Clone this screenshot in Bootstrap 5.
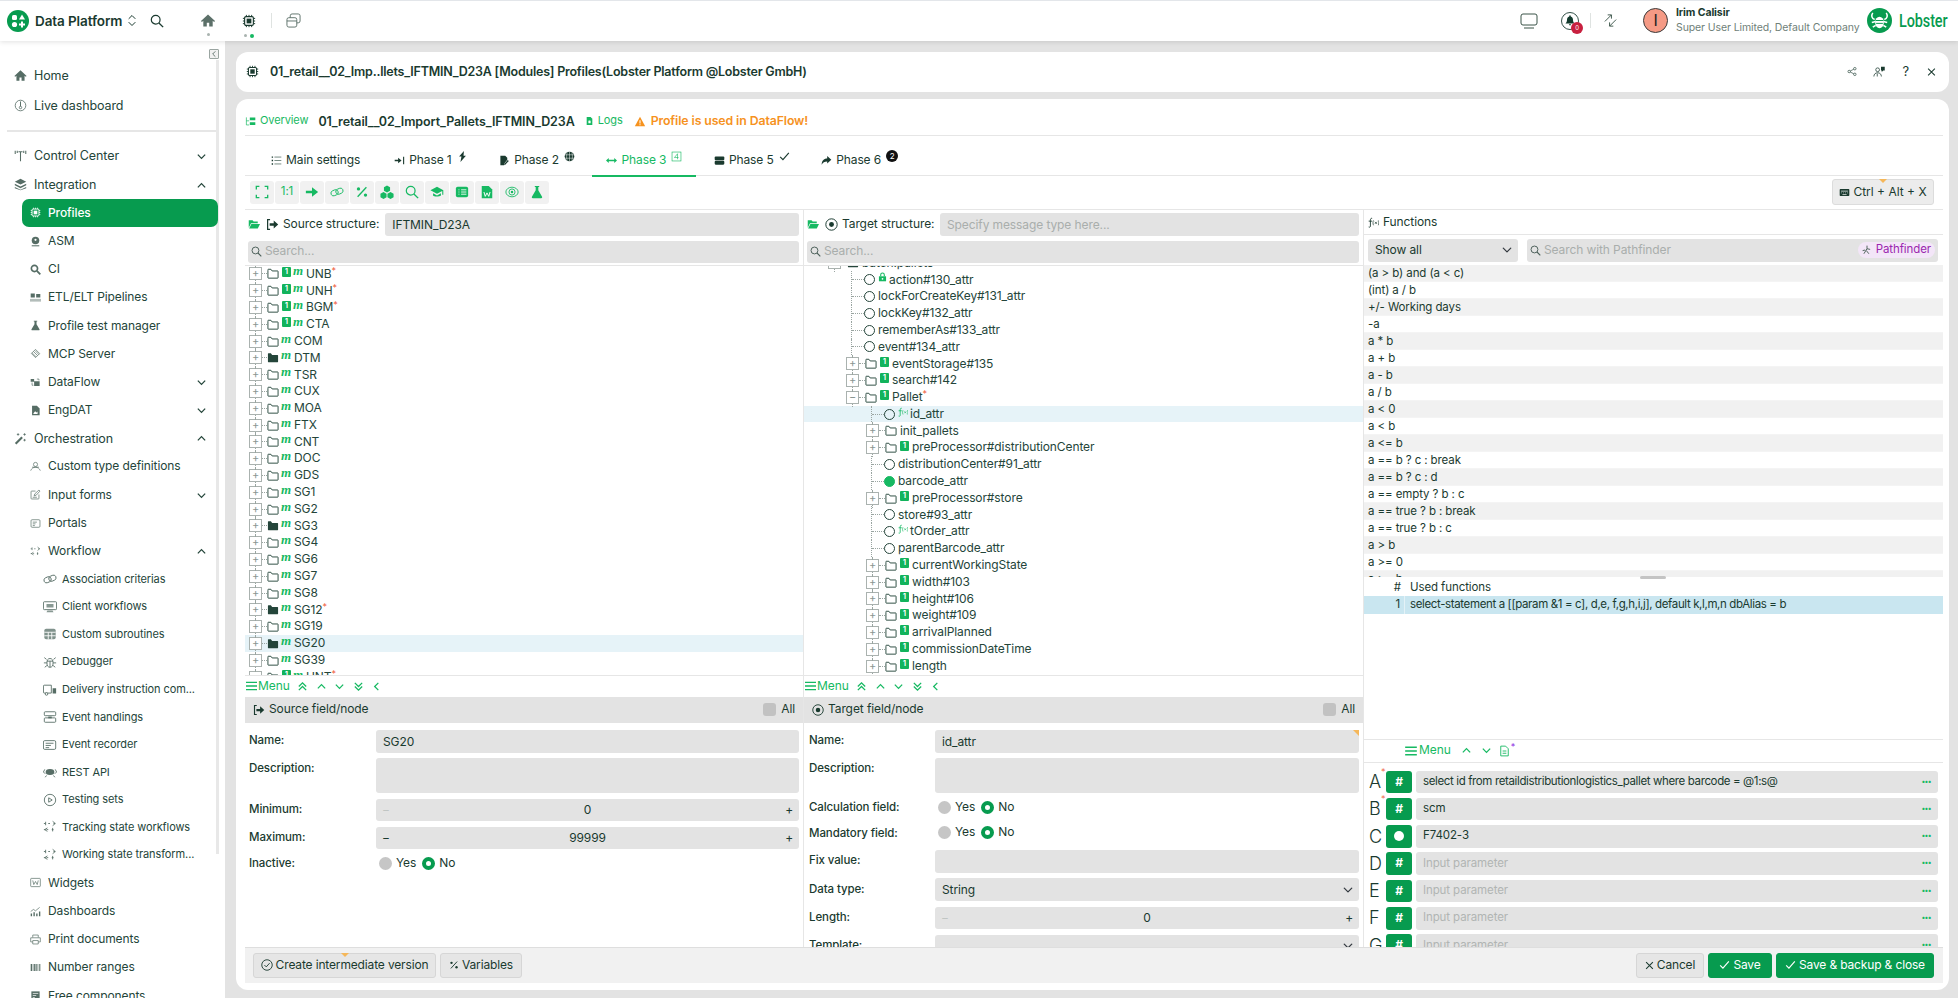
<!DOCTYPE html>
<html lang="en">
<head>
  <meta charset="UTF-8" />
  <meta name="viewport" content="width=device-width, initial-scale=1.0" />
  <title>Data Platform - Profiles</title>
  <link href="https://cdn.jsdelivr.net/npm/bootstrap@5.3.0/dist/css/bootstrap.min.css" rel="stylesheet" />
  <script src="https://cdn.jsdelivr.net/npm/bootstrap@5.3.0/dist/js/bootstrap.bundle.min.js"></script>
  <style>
    :root { --ink: #1a3a2f; --green: #079b4f; --bright: #16b962; --fill: #e3e3e3; --pale: #f1f1f1; --line: #e6e6e6; }
    html, body { height: 100%; overflow: hidden; }
    body { background: var(--fill); color: var(--ink); font: 12px/1.2 Inter, "Liberation Sans", sans-serif; letter-spacing: -.1px; }
    svg { flex: none; display: block; }
    .tight-text { letter-spacing: -.37px; }

    /* top bar */
    .top-bar { height: 41px; background: #fff; box-shadow: 0 1px 5px rgba(0,0,0,.12); position: relative; z-index: 2; padding: 0 12px 0 7px; border-top: 1px solid #e3e6ea; }
    .brand-name { font-size: 13.5px; font-weight: 600; margin-left: 6px; }
    .top-dot { width: 3px; height: 3px; border-radius: 50%; background: #a9b3af; position: absolute; top: 20px; }
    .top-dot.on { width: 4px; height: 4px; background: var(--bright); }
    .top-slot { position: relative; }
    .top-sep { width: 1px; height: 15px; background: #dfe3e1; }
    .bell-wrap { width: 18px; height: 18px; border: 1px solid #35524a; border-radius: 50%; position: relative; color: #123a2d; }
    .bell-count { position: absolute; right: -5px; bottom: -5px; width: 12px; height: 12px; border-radius: 50%; background: #c8203f; color: #fff; font-size: 6px; line-height: 12px; text-align: center; }
    .avatar-ring { width: 25px; height: 25px; border-radius: 50%; background: #f59a85; border: 1px solid #3b3b3b; color: #222; font-size: 16px; line-height: 23px; text-align: center; }
    .user-block { width: 191px; white-space: nowrap; }
    .user-name { font-size: 10.5px; font-weight: 700; }
    .user-sub { font-size: 10.5px; color: #6f7f79; margin-top: 2px; }
    .lobster-word { width: 47px; color: var(--green); font: 500 18px Roboto, sans-serif; margin-left: 7px; transform: scaleX(.8); transform-origin: left center; white-space: nowrap; }

    /* sidebar */
    .side-bar { width: 225px; flex: none; background: #fff; position: relative; overflow: hidden; padding-top: 20px; }
    .side-track { position: absolute; left: 216px; top: 19px; width: 3px; height: 794px; background: #e8e8e8; }
    .side-close { position: absolute; left: 209px; top: 8px; width: 10px; height: 10px; border: 1px solid #9aa5a1; border-radius: 1px; background: #f1f1f1; }
    .side-link { height: 28.2px; display: flex; align-items: center; color: #24453a; text-decoration: none; white-space: nowrap; position: relative; font-size: 12px; }
    .side-link.lv0 { padding-left: 14px; font-size: 12.5px; }
    .side-link.lv1 { padding-left: 30px; }
    .side-link.lv2 { padding-left: 43px; height: 27.6px; font-size: 11px; }
    .side-link > svg:first-child { margin-right: 7px; color: #566d65; }
    .side-link.lv2 > svg:first-child { margin-right: 5px; }
    .side-link.is-on { background: var(--green); color: #fff; margin: 0 7px 0 22px; padding-left: 8px; border-radius: 7px; font-weight: 500; }
    .side-link.is-on > svg:first-child { color: #fff; }
    .side-caret { position: absolute; left: 196px; top: 50%; margin-top: -5px; color: #24453a; }
    .side-rule { height: 2px; background: #e6e6e6; margin: 9px 7px 10px 7px; }
    .side-rule + .side-link { margin-bottom: 1px; }

    /* cards */
    .work-area { flex: 1; min-width: 0; padding: 11px 9px 0 11px; }
    .title-card { height: 40px; background: #fff; border-radius: 12px; margin-bottom: 7px; padding: 0 13px 0 10px; }
    .title-text { font-weight: 600; font-size: 12.5px; margin-left: 11px; white-space: nowrap; }
    .title-card .title-text { letter-spacing: -.22px; }
    .main-card { height: 891px; background: #fff; border-radius: 12px; padding: 0 6px 7px 9px; }
    .over-row { height: 37px; border-bottom: 1px solid var(--line); white-space: nowrap; padding-top: 9px; }
    .green-link { color: var(--bright); font-size: 11px; }
    .warn-text { color: #f6921e; font-weight: 600; font-size: 12.3px; }
    .tab-row { height: 40px; border-bottom: 1px solid var(--line); padding-left: 26px; white-space: nowrap; }
    .tab-item { height: 40px; display: flex; align-items: center; position: relative; font-size: 12px; padding-top: 9px; }
    .tab-item + .tab-item { margin-left: 31.5px; }
    .tab-item:nth-child(2) { margin-left: 34px; }
    .tab-item .tab-sup { margin: -8px 0 0 5px; }
    .tab-item.is-on { color: var(--bright); }
    .tab-item.is-on::after { content: ""; position: absolute; left: -14px; right: -14px; bottom: -1px; height: 2px; background: var(--bright); }
    .tool-row { height: 34px; border-bottom: 1px solid var(--line); padding: 0 9px 0 5px; }
    .tool-btn { width: 24px; height: 23px; background: var(--pale); border-radius: 3px; color: var(--bright); display: flex; align-items: center; justify-content: center; font-size: 11.5px; margin-right: 1px; }
    .key-btn { width: 102px; height: 26px; position: relative; background: #ececec; border: 1px solid #dcdcdc; border-radius: 3px; font-size: 12px; color: var(--ink); padding: 0; display: flex; align-items: center; justify-content: center; gap: 3px; }
    .hint-tip { position: absolute; top: -1px; left: 50%; margin-left: -4px; border: 4px solid transparent; border-top: 4px solid #f5b75a; border-bottom: 0; }

    /* panels */
    .panel-row { height: 737px; }
    .pane { position: relative; overflow: hidden; }
    .pane-src { width: 559px; flex: none; border-right: 1px solid var(--line); }
    .pane-dst { width: 560px; flex: none; border-right: 1px solid var(--line); }
    .pane-fn { flex: 1; min-width: 0; }
    .struct-row { height: 31px; padding: 3px 4px 5px 3px; white-space: nowrap; font-size: 12px; }
    .struct-label { width: 108px; margin: 0 6px 0 4px; }
    .struct-label.short { width: 91px; margin-right: 7px; }
    .fill-input.form-control, .fill-input.form-select { background-color: var(--fill); border: 0; border-radius: 3px; color: var(--ink); font-size: 12px; padding: 0 7px; height: 23px; min-height: 0; box-shadow: none; letter-spacing: -.1px; resize: none; }
    .fill-input::placeholder { color: #a9aeac; }
    .fill-input.form-select { background-position: right 6px center; background-size: 10px; }
    .find-box { height: 22px; background: var(--fill); border-radius: 3px; color: #a9aeac; padding: 0 3px; margin: 0 4px 2px 3px; gap: 3px; font-size: 12px; }
    .find-box svg { color: #4b5f58; }
    .tree-box { height: 410px; overflow: hidden; border-top: 1px solid var(--line); }
    .tree-shift { margin-top: -11px; }
    .tree-line { height: 16.8px; display: flex; align-items: center; white-space: nowrap; font-size: 12px; color: #24453a; }
    .tree-line.is-sel { background: #e6f3f8; }
    .tree-pad { flex: none; align-self: stretch; }
    .tree-pad.guide { border-right: 1px dotted #9aa5a1; }
    .tree-plus { width: 13px; height: 13px; flex: none; position: relative; border: 1px solid #aab2af; background: #fff; color: #8a9692; font-size: 11px; line-height: 10px; text-align: center; }
    .tree-plus::before { content: ""; position: absolute; left: 5px; top: -3px; height: 2px; border-left: 1px dotted #9aa5a1; }
    .tree-plus::after { content: ""; position: absolute; left: 5px; bottom: -4px; height: 3px; border-left: 1px dotted #9aa5a1; }
    .tree-dash { flex: none; border-top: 1px dotted #9aa5a1; }
    .tree-one { width: 9px; height: 10px; flex: none; background: #12b35c; color: #fff; border-radius: 1px; font-size: 7px; font-weight: 700; line-height: 10px; text-align: center; margin: -4px 0 0 3px; letter-spacing: 0; }
    .tree-m { width: 10px; flex: none; color: var(--bright); font: italic 700 13px/10px "Liberation Serif", serif; text-align: center; margin: -5px 0 0 2px; }
    .tree-name { margin-left: 2px; }
    .tree-name.wide { margin-left: 3px; }
    .tree-tag { color: var(--bright); margin: -5px 0 0 3px; }
    .tree-dot { width: 11px; height: 11px; border-radius: 50%; border: 1px solid #24453a; flex: none; }
    .tree-dot.on { background: var(--bright); border-color: var(--bright); }
    .req-star { color: #ef5a3c; font-size: 9px; margin-top: -5px; }
    .menu-strip { height: 22px; border-top: 1px solid var(--line); padding-left: 1px; color: var(--bright); gap: 1px; font-size: 12px; background: #fff; }
    .menu-strip svg.chev { margin-left: 6.5px; }
    .node-head { height: 26px; background: var(--fill); padding: 0 8px; font-size: 12px; white-space: nowrap; }
    .all-box { width: 13px; height: 13px; border-radius: 3px; background: #c2c2c2; margin-right: 5px; }
    .form-area { padding: 7px 4px 0; }
    .form-line { display: flex; align-items: center; margin-bottom: 5.5px; font-size: 11.5px; font-weight: 500; color: #1a3a2f; }
    .form-line > label { width: 127px; flex: none; margin: 0; }
    .pane-dst .form-area { padding-left: 5px; }
    .pane-dst .form-line > label { width: 126px; }
    .form-line.tall { align-items: flex-start; }
    .form-line.tall > label { padding-top: 4px; }
    .form-line.tall .form-control { height: 35px; }
    .form-line.radio-row { margin-bottom: 6.5px; }
    .step-box { height: 22.5px; flex: 1; background: var(--fill); border-radius: 3px; padding: 0 6px; font-weight: 400; font-size: 12px; }
    .step-box .dim { color: #c0c5c3; }
    .pick-line { height: 21px; flex: 1; padding-left: 3px; font-weight: 400; font-size: 12px; gap: 4px; margin-top: -2px; }
    .pick-off { width: 13px; height: 13px; border-radius: 50%; background: #c6c6c6; }
    .pick-on { width: 13px; height: 13px; border-radius: 50%; border: 4px solid var(--green); background: #fff; margin-left: 2px; }
    .fold-corner { position: absolute; right: 0; top: 0; border-top: 6px solid #f5b75a; border-left: 6px solid transparent; }

    /* functions */
    .fn-head { height: 24px; border-bottom: 1px solid var(--line); padding: 1px 0 0 4px; font-size: 12px; gap: 4px; margin-top: 1px; }
    .fn-tools { height: 30px; padding: 4px 5px 3px 4px; gap: 9px; }
    .fn-pick { width: 150px !important; flex: none; }
    .fn-find.find-box { height: 23px; margin: 0; }
    .path-tag { margin-left: auto; background: #f3e6f8; color: #9b26af; border-radius: 9px; padding: 1px 4px; font-size: 11.5px; white-space: nowrap; }
    .fn-list { height: 312px; overflow: hidden; }
    .fn-line { height: 17px; line-height: 17px; padding-left: 4px; font-size: 11.5px; border-bottom: 1px solid #f4f4f4; }
    .fn-line:nth-child(odd) { background: var(--pale); }
    .fn-grip { height: 4px; position: relative; background: #fff; }
    .fn-grip::after { content: ""; position: absolute; left: 276px; top: -1px; width: 26px; height: 3px; border-radius: 2px; background: #c4c4c4; }
    .used-head, .used-line { display: flex; height: 18px; align-items: center; font-size: 11.5px; white-space: nowrap; }
    .used-head { height: 15px; }
    .used-num { width: 41px; flex: none; text-align: right; padding-right: 4px; margin-right: 5px; align-self: stretch; display: flex; align-items: center; justify-content: flex-end; }
    .used-line { background: #c9e6f0; }
    .used-line .used-num { border-right: 1px solid #e4f2f7; }
    .used-gap { height: 126px; border-bottom: 1px solid var(--line); }
    .param-menu { height: 23px; border-bottom: 1px solid var(--line); padding-left: 41px; gap: 2px; color: var(--bright); font-size: 12px; }
    .param-menu .gap-a { margin-left: 8px; }
    .param-menu .gap-b { margin-left: 7px; }
    .param-menu .gap-c { margin-left: 6px; }
    .param-mark { color: #8a2be2; font-size: 9px; margin-top: -6px; }
    .param-list { padding: 8px 5px 0 5px; height: 184px; overflow: hidden; }
    .param-line { display: flex; align-items: center; height: 22.5px; margin-bottom: 4.8px; }
    .param-letter { width: 17px; flex: none; font-size: 18px; font-weight: 300; position: relative; }
    .param-letter i { position: absolute; left: 12px; top: -4px; color: #ef5a3c; font-style: normal; font-size: 9px; }
    .param-kind { width: 26px; height: 22.5px; flex: none; background: var(--green); color: #fff; border-radius: 3px; font-size: 12px; font-weight: 700; display: flex; align-items: center; justify-content: center; margin-right: 4px; }
    .param-kind b { width: 10px; height: 10px; border-radius: 50%; background: #fff; }
    .param-box { flex: 1; height: 22.5px; background: var(--fill); border-radius: 3px; padding: 0 7px; font-size: 11.5px; white-space: nowrap; }
    .param-box.empty { color: #b1b5b3; }
    .more-dots { margin-left: auto; color: var(--bright); font-weight: 700; font-size: 7px; letter-spacing: -.2px; }

    /* footer */
    .foot-row { height: 36px; background: var(--pale); border-top: 1px solid #dedede; padding: 0 9px 0 8px; }
    .foot-row .btn { height: 25px; padding: 0 6px; font-size: 12px; border-radius: 3px; display: inline-flex; align-items: center; justify-content: center; gap: 3px; white-space: nowrap; letter-spacing: -.15px; position: relative; }
    .btn.btn-grey { background: #e6e6e6; border: 1px solid #d6d6d6; color: var(--ink); }
    .btn.btn-save { background: var(--green); border: 1px solid var(--green); color: #fff; }
    .foot-row .btn.wide-cancel { width: 68px; }
    .foot-row .btn.wide-save { width: 64px; }
    .foot-row .btn.wide-close { width: 158px; }
    .foot-row .btn.wide-version { width: 183px; }
    .foot-row .btn.wide-vars { width: 82px; }
  </style>
</head>
<body>
  <!-- icon sprite -->
  <svg width="0" height="0" class="position-absolute">
    <defs>
      <symbol id="i-logo" viewBox="0 0 22 22"><circle cx="11" cy="11" r="11" fill="#079b4f"/><rect x="5" y="5" width="5" height="5" rx="1.5" fill="#fff"/><path d="M15 4.5l3 5h-6z" fill="#fff"/><circle cx="7.5" cy="14.5" r="2.6" fill="#fff"/><path d="M15 11.5v6M12 14.5h6" stroke="#fff" stroke-width="2"/></symbol>
      <symbol id="i-home" viewBox="0 0 16 16"><path fill="currentColor" d="M8 1.5.5 8.5l1 1L3 8.2v6.300h3.700v-4h2.600v4H13V8.200l1.500 1.300 1-1z"/></symbol>
      <symbol id="i-chip" viewBox="0 0 16 16"><rect x="3" y="3" width="10" height="10" rx="1.5" fill="none" stroke="currentColor" stroke-width="1.3"/><rect x="5.3" y="5.3" width="5.4" height="5.4" fill="currentColor"/><path d="M5 1v2M8 1v2M11 1v2M5 13v2M8 13v2M11 13v2M1 5h2M1 8h2M1 11h2M13 5h2M13 8h2M13 11h2" stroke="currentColor" stroke-width="1.1"/></symbol>
      <symbol id="i-search" viewBox="0 0 16 16"><circle cx="6.5" cy="6.5" r="5" fill="none" stroke="currentColor" stroke-width="1.4"/><path d="M10.2 10.2 15 15" stroke="currentColor" stroke-width="1.6"/></symbol>
      <symbol id="i-windows" viewBox="0 0 16 16"><rect x="1" y="5" width="10.5" height="10" rx="2" fill="none" stroke="currentColor"/><path d="M4.5 5V3a2 2 0 0 1 2-2H13a2 2 0 0 1 2 2v5.5a2 2 0 0 1-2 2h-1.500M1 8.500h10.500" fill="none" stroke="currentColor"/></symbol>
      <symbol id="i-updown" viewBox="0 0 12 16"><path d="M2 6l4-4 4 4M2 10l4 4 4-4" fill="none" stroke="currentColor" stroke-width="1.2"/></symbol>
      <symbol id="i-down" viewBox="0 0 12 12"><path d="M2 4l4 4 4-4" fill="none" stroke="currentColor" stroke-width="1.4"/></symbol>
      <symbol id="i-up" viewBox="0 0 12 12"><path d="M2 8l4-4 4 4" fill="none" stroke="currentColor" stroke-width="1.4"/></symbol>
      <symbol id="i-up2" viewBox="0 0 12 12"><path d="M2 6l4-4 4 4M2 10l4-4 4 4" fill="none" stroke="currentColor" stroke-width="1.4"/></symbol>
      <symbol id="i-down2" viewBox="0 0 12 12"><path d="M2 2l4 4 4-4M2 6l4 4 4-4" fill="none" stroke="currentColor" stroke-width="1.4"/></symbol>
      <symbol id="i-left" viewBox="0 0 12 12"><path d="M8 2 4 6l4 4" fill="none" stroke="currentColor" stroke-width="1.4"/></symbol>
      <symbol id="i-gauge" viewBox="0 0 16 16"><circle cx="8" cy="8" r="6.5" fill="none" stroke="currentColor"/><path d="M8 3v6" stroke="currentColor" stroke-width="1.2"/><circle cx="8" cy="10.5" r="1.5" fill="none" stroke="currentColor"/></symbol>
      <symbol id="i-antenna" viewBox="0 0 16 16"><path d="M8 4v11M1.500 2v4M4 2v3M12 2v3M14.500 2v4M5.500 3.500h5" fill="none" stroke="currentColor" stroke-width="1.3"/></symbol>
      <symbol id="i-layers" viewBox="0 0 16 16"><path fill="currentColor" d="M8 1 1 4.500 8 8l7-3.500zM1 7l7 3.500L15 7v2l-7 3.500L1 9zm0 4 7 3.500 7-3.500v1.500L8 15l-7-2.500z"/></symbol>
      <symbol id="i-globe" viewBox="0 0 16 16"><circle cx="8" cy="6.500" r="5.500" fill="currentColor"/><path d="M2.500 13.500h11v1.500h-11z" fill="currentColor"/><circle cx="8" cy="5.500" r="1.600" fill="#fff"/></symbol>
      <symbol id="i-findfill" viewBox="0 0 16 16"><circle cx="6.500" cy="6.500" r="4.500" fill="none" stroke="currentColor" stroke-width="2.400"/><path d="M10 10l5 5" stroke="currentColor" stroke-width="2.600"/></symbol>
      <symbol id="i-etl" viewBox="0 0 16 16"><path fill="currentColor" d="M1 2h6v6H1zM9 3h6v5H9z"/><path fill="currentColor" opacity=".45" d="M0 10h16v4H0z"/></symbol>
      <symbol id="i-flask" viewBox="0 0 16 16"><path fill="currentColor" d="M5.500 1h5v1.200h-1V6l4.300 7.500c.4.800-.1 1.500-1 1.500H3.200c-.9 0-1.400-.7-1-1.500L6.500 6V2.200h-1z"/></symbol>
      <symbol id="i-mcp" viewBox="0 0 16 16"><path d="M8 2l6 6-6 6-6-6zM5 5l6 6M7 3.500l6 6M3 7l6 6" fill="none" stroke="currentColor"/></symbol>
      <symbol id="i-flow" viewBox="0 0 16 16"><path fill="currentColor" d="M1 3h5v4H1zM6 6h8v7H6z"/><path d="M3 8v4h2M10 3h3v2" fill="none" stroke="currentColor"/></symbol>
      <symbol id="i-fileimg" viewBox="0 0 16 16"><path fill="currentColor" d="M3 1h7l4 4v10H3z"/><path fill="#fff" d="M5 12l2.500-3 2 2 1.500-1.500V13H5z"/></symbol>
      <symbol id="i-wand" viewBox="0 0 16 16"><path d="M2 14.500 10 6.500" stroke="currentColor" stroke-width="2.600"/><path d="M5 1.500v3M3.500 3h3M13 1.500v3M11.500 3h3M13 8.500v3M11.500 10h3" stroke="currentColor"/></symbol>
      <symbol id="i-people" viewBox="0 0 16 16"><circle cx="8" cy="5" r="3" fill="none" stroke="currentColor"/><path d="M1 14c1-3 4-5 7-5s6 2 7 5M3 9h10" fill="none" stroke="currentColor"/></symbol>
      <symbol id="i-form" viewBox="0 0 16 16"><path d="M13 8v5.500a1 1 0 0 1-1 1H2.500a1 1 0 0 1-1-1V4a1 1 0 0 1 1-1H8M6 10l1-3 6-5.500 1.500 1.500L9 9zM4 12h6" fill="none" stroke="currentColor"/></symbol>
      <symbol id="i-box" viewBox="0 0 16 16"><rect x="1.500" y="2.500" width="13" height="11" rx="1.500" fill="none" stroke="currentColor"/><path d="M4 6h6M4 8.500h4M4 11h3" stroke="currentColor"/></symbol>
      <symbol id="i-slide" viewBox="0 0 16 16"><path d="M1 4h2M6 4h3M12 4h3M1 11h6M10 11h2" stroke="currentColor" stroke-dasharray="2 1"/><path d="M3 2v4M11 9v4" stroke="currentColor"/><path d="M11 1.500 14 4l-3 2.500M5 9l-3 2 3 2" fill="none" stroke="currentColor"/></symbol>
      <symbol id="i-link" viewBox="0 0 16 16"><rect x="1" y="6" width="8.500" height="6" rx="3" transform="rotate(-25 5 9)" fill="none" stroke="currentColor"/><rect x="6.500" y="4" width="8.500" height="6" rx="3" transform="rotate(-25 11 7)" fill="none" stroke="currentColor"/></symbol>
      <symbol id="i-desk" viewBox="0 0 16 16"><rect x=".5" y="2" width="15" height="9" rx="1" fill="none" stroke="currentColor"/><path d="M4 4.500h8v4H4zM5 12h6l1 2H4z" fill="currentColor" opacity=".7"/></symbol>
      <symbol id="i-table" viewBox="0 0 16 16"><rect x="1.500" y="2" width="13" height="12" rx="2" fill="currentColor" opacity=".75"/><path d="M1.500 6h13M1.500 10h13M6 6v8M10 6v8" stroke="#fff"/></symbol>
      <symbol id="i-bug" viewBox="0 0 16 16"><ellipse cx="8" cy="9" rx="3.500" ry="5" fill="none" stroke="currentColor"/><path d="M4 5 1.500 3M12 5l2.500-2M4.500 9H1M11.500 9H15M4.500 12 2 14M11.500 12 14 14M4.500 7h7M8 7v7" fill="none" stroke="currentColor"/></symbol>
      <symbol id="i-truck" viewBox="0 0 16 16"><path d="M9.500 11.500H1.500a1 1 0 0 1-1-1V3.500a1 1 0 0 1 1-1h8z" fill="none" stroke="currentColor"/><path fill="currentColor" d="M11 6h4v6h-4z"/><circle cx="4" cy="12.500" r="1.500" fill="#fff" stroke="currentColor"/></symbol>
      <symbol id="i-handle" viewBox="0 0 16 16"><rect x="1.500" y="2" width="13" height="4.500" rx="1" fill="none" stroke="currentColor"/><rect x="1.500" y="9" width="13" height="5" rx="1" fill="none" stroke="currentColor"/><path d="M6 7.500h4v2H6z" fill="currentColor"/></symbol>
      <symbol id="i-rec" viewBox="0 0 16 16"><rect x=".5" y="3" width="14" height="10" rx="1.500" fill="none" stroke="currentColor"/><path d="M3 6h9M3 8.500h6M3 11h4" stroke="currentColor"/></symbol>
      <symbol id="i-crab" viewBox="0 0 16 16"><ellipse cx="8" cy="8" rx="5" ry="3.500" fill="currentColor"/><path d="M2 5 .5 8l2 2M14 5l1.500 3-2 2M4 12l-1.500 2M12 12l1.500 2" fill="none" stroke="currentColor"/></symbol>
      <symbol id="i-play" viewBox="0 0 16 16"><circle cx="8" cy="8" r="6.500" fill="none" stroke="currentColor"/><path d="M6.500 5.500v5l4-2.500z" fill="none" stroke="currentColor"/></symbol>
      <symbol id="i-widget" viewBox="0 0 16 16"><rect x="1" y="2" width="14" height="12" rx="1" fill="none" stroke="currentColor"/><path d="M4 5l1.500 6L8 6.500 10.500 11 12 5" fill="none" stroke="currentColor"/></symbol>
      <symbol id="i-chart" viewBox="0 0 16 16"><path d="M1 8l4-3 3 2 6-5" fill="none" stroke="currentColor"/><path fill="currentColor" d="M1 11h2v4H1zM5 9h2v6H5zM9 11h2v4H9zM13 8h2v7h-2z"/></symbol>
      <symbol id="i-print" viewBox="0 0 16 16"><path d="M4 5V1.500h8V5M1 5.500h14v6h-3M4 11.500H1v-6M4 9.500h8v5H4z" fill="none" stroke="currentColor"/></symbol>
      <symbol id="i-bars" viewBox="0 0 16 16"><path fill="currentColor" d="M1 3h2v10H1zM4 3h1v10H4zM6 3h2v10H6zM9 3h1v10H9zM11 3h1v10h-1zM13.500 3h1.500v10h-1.500z"/></symbol>
      <symbol id="i-free" viewBox="0 0 16 16"><path fill="currentColor" d="M2 2h12v12H2z"/><path d="M4 5h8M4 8h5M4 11h3" stroke="#fff"/></symbol>
      <symbol id="i-monitor" viewBox="0 0 18 16"><rect x="1" y="1" width="16" height="11" rx="2" fill="none" stroke="currentColor"/><path d="M4 15h10" stroke="currentColor"/></symbol>
      <symbol id="i-bell" viewBox="0 0 16 16"><path fill="currentColor" d="M8 1c-.6 0-1 .4-1 1v.6C4.900 3 4 4.800 4 7c0 2.500-.8 3.500-2 5h12c-1.200-1.500-2-2.500-2-5 0-2.200-.9-4-3-4.400V2c0-.6-.4-1-1-1zM6.500 13a1.500 1.500 0 0 0 3 0z"/></symbol>
      <symbol id="i-swap" viewBox="0 0 16 16"><path d="M2 9l7-7M5 2h4v4M14 7l-7 7M11 14H7v-4" fill="none" stroke="currentColor"/></symbol>
      <symbol id="i-crabmark" viewBox="0 0 26 26"><circle cx="13" cy="13" r="13" fill="#079b4f"/><ellipse cx="13" cy="15" rx="4.500" ry="6" fill="#fff"/><path d="M6 5c-2 3-1 6 2 7M20 5c2 3 1 6-2 7M5 15l4-1M21 15l-4-1M6 20l3-2M20 20l-3-2" fill="none" stroke="#fff" stroke-width="1.600"/><path d="M9 13h8M9.500 16h7" stroke="#079b4f"/></symbol>
      <symbol id="i-share" viewBox="0 0 16 16"><circle cx="3.500" cy="8" r="2" fill="none" stroke="currentColor"/><circle cx="12.500" cy="3.500" r="2" fill="none" stroke="currentColor"/><circle cx="12.500" cy="12.500" r="2" fill="none" stroke="currentColor"/><path d="M5.300 7.100 10.700 4.400M5.300 8.900l5.400 2.700" stroke="currentColor"/></symbol>
      <symbol id="i-users" viewBox="0 0 16 16"><circle cx="5.500" cy="5" r="2.500" fill="none" stroke="currentColor"/><path d="M.5 14c0-3 2-5 5-5s5 2 5 5M5 10v4" fill="none" stroke="currentColor"/><path fill="currentColor" d="M10 1h5v5h-2l-2 2V6h-1z"/></symbol>
      <symbol id="i-close" viewBox="0 0 12 12"><path d="M1.500 1.500l9 9M10.500 1.500l-9 9" stroke="currentColor" stroke-width="1.400"/></symbol>
      <symbol id="i-tree" viewBox="0 0 16 16"><path d="M2 2v11h4M2 7h4" fill="none" stroke="currentColor"/><path fill="currentColor" d="M7 2h8v4H7zM7 9h8v4H7z"/></symbol>
      <symbol id="i-filex" viewBox="0 0 16 16"><path fill="currentColor" d="M3 1h7l3 3v11H3z"/><rect x="6" y="7" width="4" height="5" rx="1" fill="#fff"/></symbol>
      <symbol id="i-warn" viewBox="0 0 16 16"><path fill="currentColor" d="M8 1 .5 15h15z"/><path d="M8 6v5M8 12v1.500" stroke="#fff" stroke-width="1.500"/></symbol>
      <symbol id="i-list" viewBox="0 0 16 16"><path d="M5 3h10M5 8h10M5 13h10" stroke="currentColor" stroke-width="1.200" opacity=".7"/><path d="M1 3h2M1 8h2M1 13h2" stroke="currentColor" stroke-width="2"/></symbol>
      <symbol id="i-arrowbar" viewBox="0 0 16 16"><path fill="currentColor" d="M1 7h5V4l5 4-5 4V9H1z"/><path d="M14 2.500v11" stroke="currentColor" stroke-width="1.600"/></symbol>
      <symbol id="i-bolt" viewBox="0 0 12 16"><path fill="currentColor" d="M8 0 1 8h3.500L3 16l8-9H7.500z"/></symbol>
      <symbol id="i-filepen" viewBox="0 0 16 16"><path fill="currentColor" d="M2 1h7l3 3v3l-4 5-.5 3H2z"/><path d="M8 14l5.500-6" stroke="currentColor" stroke-width="2"/></symbol>
      <symbol id="i-world" viewBox="0 0 16 16"><circle cx="8" cy="8" r="7" fill="currentColor"/><path d="M1 5.500h14M1 10.500h14M8 1v14M4.500 2c-1 4-1 8 0 12M11.500 2c1 4 1 8 0 12" fill="none" stroke="#fff" stroke-width=".7"/></symbol>
      <symbol id="i-leftright" viewBox="0 0 16 16"><path fill="currentColor" d="M0 8l4-3.500v2.500h8V4.500L16 8l-4 3.500V9H4v2.500z"/></symbol>
      <symbol id="i-four" viewBox="0 0 16 16"><rect x="1.500" y="1.500" width="13" height="13" fill="none" stroke="currentColor" stroke-width=".9"/><path d="M9.500 4v8M9.500 4 5 9.500h6" fill="none" stroke="currentColor" stroke-width=".9"/></symbol>
      <symbol id="i-server" viewBox="0 0 16 16"><rect x="1" y="2" width="14" height="5.500" rx="1.500" fill="currentColor"/><rect x="1" y="8.500" width="14" height="5.500" rx="1.500" fill="currentColor"/></symbol>
      <symbol id="i-tick" viewBox="0 0 14 12"><path d="M1.500 6.500 5 10l7.500-8.500" fill="none" stroke="currentColor" stroke-width="1.500"/></symbol>
      <symbol id="i-reply" viewBox="0 0 16 16"><path fill="currentColor" d="M15 7 9 1.500V5C4 5 1 8.500 1 14c1.800-3.500 4-4.700 8-4.700v3.200z"/></symbol>
      <symbol id="i-expand" viewBox="0 0 16 16"><path d="M1.500 5V1.500H5M11 1.500h3.500V5M14.500 11v3.500H11M5 14.500H1.500V11" fill="none" stroke="currentColor" stroke-width="1.500"/></symbol>
      <symbol id="i-right" viewBox="0 0 16 16"><path fill="currentColor" d="M1 6.500h7V2.500L15 8l-7 5.500v-4H1z"/></symbol>
      <symbol id="i-pct" viewBox="0 0 16 16"><path d="M13 2.500 3 13.500" stroke="currentColor" stroke-width="1.500"/><circle cx="4" cy="4.500" r="1.900" fill="currentColor"/><circle cx="12" cy="11.500" r="1.900" fill="currentColor"/></symbol>
      <symbol id="i-cubes" viewBox="0 0 16 16"><path fill="currentColor" d="M8 .5l3.500 2v4L8 8.500l-3.500-2v-4zM4 8l3.500 2v4L4 16 .5 14v-4zM12 8l3.500 2v4L12 16l-3.500-2v-4z"/></symbol>
      <symbol id="i-cap" viewBox="0 0 16 16"><path fill="currentColor" d="M8 2 .5 6 8 10l6-3.200V11h1.200V6zM3.500 9.500V12c1 1.500 7 1.500 9 0V9.500L8 12z"/></symbol>
      <symbol id="i-rows" viewBox="0 0 16 16"><rect x="1" y="2" width="14" height="12" rx="2" fill="currentColor"/><path d="M4 5.500h1M7 5.500h6M4 8h1M7 8h6M4 10.500h1M7 10.500h6" stroke="#fff"/></symbol>
      <symbol id="i-fileword" viewBox="0 0 16 16"><path fill="currentColor" d="M2 1h8l4 4v10H2z"/><path d="M4.500 8l1.500 5L8 9l2 4 1.500-5" fill="none" stroke="#fff" stroke-width="1.100"/></symbol>
      <symbol id="i-eye" viewBox="0 0 16 16"><ellipse cx="8" cy="8" rx="7" ry="5.500" fill="none" stroke="currentColor"/><circle cx="8" cy="8" r="3.500" fill="none" stroke="currentColor"/><circle cx="8" cy="8" r="1.400" fill="currentColor"/></symbol>
      <symbol id="i-keyb" viewBox="0 0 16 16"><rect x="1" y="3" width="14" height="10" rx="1" fill="currentColor"/><path d="M3 6h10M3 8.500h1M6 8.500h1M9 8.500h1M12 8.500h1M5 11h6" stroke="#fff"/></symbol>
      <symbol id="i-openf" viewBox="0 0 16 16"><path fill="currentColor" d="M1 3h5l1.500 1.500H13V7H4L1 13zM4.500 8H16l-3 6H1.500z"/></symbol>
      <symbol id="i-source" viewBox="0 0 16 16"><path d="M5 2H2v12h3" fill="none" stroke="currentColor" stroke-width="1.500"/><path fill="currentColor" d="M4.500 6.500h5V3L15 8l-5.500 5V9.500h-5z"/></symbol>
      <symbol id="i-target" viewBox="0 0 16 16"><circle cx="8" cy="8" r="7" fill="none" stroke="currentColor" stroke-width="1.200"/><circle cx="8" cy="8" r="3" fill="currentColor"/></symbol>
      <symbol id="i-fx" viewBox="0 0 16 16"><path d="M6 2C4 1.500 3.500 3 3.500 5v8C3.500 15 2.500 15 1 14.500M1 6h5" fill="none" stroke="currentColor" stroke-width="1.300"/><path d="M8 5C7 7 7 10 8 12M15 5c1 2 1 5 0 7M10 7l3 3M13 7l-3 3" fill="none" stroke="currentColor"/></symbol>
      <symbol id="i-folder" viewBox="0 0 14 13"><path d="M1 3V11.500a.5.500 0 0 0 .5.500H12.500a.5.500 0 0 0 .5-.500V4a.5.500 0 0 0-.5-.500H6L4.500 1.500H1.500A.5.500 0 0 0 1 2z" fill="none" stroke="currentColor" stroke-width="1.100"/></symbol>
      <symbol id="i-folderfill" viewBox="0 0 14 13"><path d="M1 3V11.500a.5.500 0 0 0 .5.500H12.500a.5.500 0 0 0 .5-.500V4a.5.500 0 0 0-.5-.500H6L4.500 1.500H1.500A.5.500 0 0 0 1 2z" fill="currentColor"/></symbol>
      <symbol id="i-lock" viewBox="0 0 12 14"><path d="M3.500 6V4a2.500 2.500 0 0 1 5 0v2" fill="none" stroke="currentColor" stroke-width="1.500"/><path fill="currentColor" d="M1 6h10v7H1z"/><circle cx="6" cy="9.500" r="1.200" fill="#fff"/></symbol>
      <symbol id="i-burger" viewBox="0 0 14 12"><path d="M0 1.500h14M0 6h14M0 10.500h14" stroke="currentColor" stroke-width="1.600"/></symbol>
      <symbol id="i-note" viewBox="0 0 12 16"><path d="M1 1.500h6.500L11 5v9.500H1zM3.500 8h5M3.500 11h5" fill="none" stroke="currentColor" stroke-width="1.200"/></symbol>
      <symbol id="i-checkc" viewBox="0 0 16 16"><circle cx="8" cy="8" r="7" fill="none" stroke="currentColor" stroke-width="1.200"/><path d="M4.500 8l2.500 2.500 4.500-5" fill="none" stroke="currentColor" stroke-width="1.200"/></symbol>
      <symbol id="i-pf" viewBox="0 0 16 16"><path d="M8 1v5L3 14M8 6l5 1M7 9l4 5M1 9l4-1" fill="none" stroke="currentColor" stroke-width="1.500"/></symbol>
    </defs>
  </svg>

  <div class="d-flex flex-column vh-100">
    <header class="top-bar d-flex align-items-center">
      <svg width="22" height="22"><use href="#i-logo"/></svg>
      <span class="brand-name">Data Platform</span>
      <svg style="margin-left:5px" width="10" height="17"><use href="#i-updown"/></svg>
      <svg style="margin-left:13px" width="14" height="14"><use href="#i-search"/></svg>
      <div class="top-slot" style="margin-left:36px"><svg width="16" height="15" color="#5c7069"><use href="#i-home"/></svg><span class="top-dot" style="left:7px"></span></div>
      <div class="top-slot" style="margin-left:26px"><svg width="14" height="14"><use href="#i-chip"/></svg><span class="top-dot" style="left:2px"></span><span class="top-dot on" style="left:8px"></span></div>
      <span class="top-sep" style="margin-left:15px"></span>
      <svg style="margin-left:14px" width="15" height="15" color="#5c7069"><use href="#i-windows"/></svg>

      <svg class="ms-auto" width="18" height="16" color="#3b5449"><use href="#i-monitor"/></svg>
      <div class="bell-wrap d-flex align-items-center justify-content-center" style="margin-left:23px"><svg width="12" height="13"><use href="#i-bell"/></svg><span class="bell-count">0</span></div>
      <span class="top-sep" style="margin-left:11px"></span>
      <svg style="margin-left:12px" width="15" height="15" color="#3b5449"><use href="#i-swap"/></svg>
      <div class="avatar-ring" style="margin-left:25px">I</div>
      <div class="user-block ms-2">
        <div class="user-name">Irim Calisir</div>
        <div class="user-sub">Super User Limited, Default Company</div>
      </div>
      <svg width="25" height="25"><use href="#i-crabmark"/></svg>
      <span class="lobster-word">Lobster</span>
    </header>

    <div class="d-flex flex-grow-1" style="min-height:0">
      <nav class="side-bar" id="sideNav">
        <span class="side-track"></span>
        <span class="side-close d-flex align-items-center justify-content-center"><svg width="8" height="8" color="#5c7069"><use href="#i-left"/></svg></span>
      </nav>

      <main class="work-area">
        <div class="title-card d-flex align-items-center">
          <svg width="13" height="13"><use href="#i-chip"/></svg>
          <span class="title-text">01_retail__02_Imp..llets_IFTMIN_D23A [Modules] Profiles(Lobster Platform @Lobster GmbH)</span>
          <svg class="ms-auto" width="10" height="11"><use href="#i-share"/></svg>
          <svg style="margin-left:16px" width="13" height="12"><use href="#i-users"/></svg>
          <span style="margin-left:16px;font-size:13px">?</span>
          <svg style="margin-left:18px" width="9" height="10"><use href="#i-close"/></svg>
        </div>

        <div class="main-card">
          <div class="over-row d-flex align-items-center">
            <svg class="green-link" width="11" height="11"><use href="#i-tree"/></svg>
            <span class="green-link ms-1">Overview</span>
            <strong class="title-text" style="margin-left:10px">01_retail__02_Import_Pallets_IFTMIN_D23A</strong>
            <svg class="green-link" style="margin-left:10px" width="9" height="12"><use href="#i-filex"/></svg>
            <span class="green-link" style="margin-left:4px">Logs</span>
            <svg style="margin-left:11px" width="12" height="11" color="#f6921e"><use href="#i-warn"/></svg>
            <span class="warn-text" style="margin-left:5px">Profile is used in DataFlow!</span>
          </div>

          <div class="tab-row d-flex" id="tabRow"></div>

          <div class="tool-row d-flex align-items-center" id="toolRow"></div>

          <div class="panel-row d-flex">
            <section class="pane pane-src">
              <div class="struct-row d-flex align-items-center">
                <svg color="#16b962" width="12" height="12"><use href="#i-openf"/></svg>
                <svg style="margin-left:6px" width="13" height="13"><use href="#i-source"/></svg>
                <span class="struct-label">Source structure:</span>
                <input class="form-control fill-input" readonly value="IFTMIN_D23A" />
              </div>
              <div class="find-box d-flex align-items-center"><svg width="11" height="11"><use href="#i-search"/></svg>Search...</div>
              <div class="tree-box" id="srcTree"></div>
              <div class="menu-strip d-flex align-items-center" data-menu></div>
              <div class="node-head d-flex align-items-center">
                <svg class="me-1" width="12" height="12"><use href="#i-source"/></svg>Source field/node
                <span class="all-box ms-auto"></span>All
              </div>
              <div class="form-area">
                <div class="form-line"><label>Name:</label><input class="form-control fill-input" readonly value="SG20" /></div>
                <div class="form-line tall"><label>Description:</label><textarea class="form-control fill-input" readonly></textarea></div>
                <div class="form-line"><label>Minimum:</label><div class="step-box d-flex align-items-center justify-content-between"><span class="dim">−</span><span>0</span><span>+</span></div></div>
                <div class="form-line"><label>Maximum:</label><div class="step-box d-flex align-items-center justify-content-between"><span>−</span><span>99999</span><span>+</span></div></div>
                <div class="form-line"><label>Inactive:</label><div class="pick-line d-flex align-items-center"><span class="pick-off"></span>Yes<span class="pick-on"></span>No</div></div>
              </div>
            </section>

            <section class="pane pane-dst">
              <div class="struct-row d-flex align-items-center">
                <svg color="#16b962" width="12" height="12"><use href="#i-openf"/></svg>
                <svg style="margin-left:6px" width="13" height="13"><use href="#i-target"/></svg>
                <span class="struct-label short">Target structure:</span>
                <input class="form-control fill-input" placeholder="Specify message type here..." />
              </div>
              <div class="find-box d-flex align-items-center"><svg width="11" height="11"><use href="#i-search"/></svg>Search...</div>
              <div class="tree-box"><div class="tree-shift" id="dstTree"></div></div>
              <div class="menu-strip d-flex align-items-center" data-menu></div>
              <div class="node-head d-flex align-items-center">
                <svg class="me-1" width="12" height="12"><use href="#i-target"/></svg>Target field/node
                <span class="all-box ms-auto"></span>All
              </div>
              <div class="form-area">
                <div class="form-line"><label>Name:</label><div class="position-relative flex-grow-1"><input class="form-control fill-input" readonly value="id_attr" /><span class="fold-corner"></span></div></div>
                <div class="form-line tall"><label>Description:</label><textarea class="form-control fill-input" readonly></textarea></div>
                <div class="form-line radio-row"><label>Calculation field:</label><div class="pick-line d-flex align-items-center"><span class="pick-off"></span>Yes<span class="pick-on"></span>No</div></div>
                <div class="form-line radio-row"><label>Mandatory field:</label><div class="pick-line d-flex align-items-center"><span class="pick-off"></span>Yes<span class="pick-on"></span>No</div></div>
                <div class="form-line"><label>Fix value:</label><input class="form-control fill-input" readonly /></div>
                <div class="form-line"><label>Data type:</label><select class="form-select fill-input"><option>String</option></select></div>
                <div class="form-line"><label>Length:</label><div class="step-box d-flex align-items-center justify-content-between"><span class="dim">−</span><span>0</span><span>+</span></div></div>
                <div class="form-line"><label>Template:</label><select class="form-select fill-input"><option></option></select></div>
              </div>
            </section>

            <section class="pane pane-fn">
              <div class="fn-head d-flex align-items-center"><svg width="11" height="11"><use href="#i-fx"/></svg>Functions</div>
              <div class="fn-tools d-flex align-items-center">
                <select class="form-select fill-input fn-pick"><option>Show all</option></select>
                <div class="find-box fn-find d-flex align-items-center flex-grow-1"><svg width="11" height="11"><use href="#i-search"/></svg>Search with Pathfinder<span class="path-tag d-flex align-items-center gap-1"><svg width="10" height="10"><use href="#i-pf"/></svg>Pathfinder</span></div>
              </div>
              <div class="fn-list" id="fnList"></div>
              <div class="fn-grip"></div>
              <div class="used-head"><span class="used-num">#</span>Used functions</div>
              <div class="used-line"><span class="used-num">1</span><span class="tight-text">select-statement a [[param &amp;1 = c], d,e, f,g,h,i,j], default k,l,m,n dbAlias = b</span></div>
              <div class="used-gap"></div>
              <div class="param-menu d-flex align-items-center">
                <svg width="12" height="10"><use href="#i-burger"/></svg><span>Menu</span>
                <svg class="gap-a" width="11" height="11"><use href="#i-up"/></svg>
                <svg class="gap-b" width="11" height="11"><use href="#i-down"/></svg>
                <svg class="gap-c" width="9" height="12"><use href="#i-note"/></svg>
                <span class="param-mark">*</span>
              </div>
              <div class="param-list" id="paramList"></div>
            </section>
          </div>

          <footer class="foot-row d-flex align-items-center gap-1">
            <button type="button" class="btn btn-grey wide-version"><span class="hint-tip"></span><svg width="12" height="12"><use href="#i-checkc"/></svg>Create intermediate version</button>
            <button type="button" class="btn btn-grey wide-vars"><svg width="10" height="10"><use href="#i-pct"/></svg>Variables</button>
            <button type="button" class="btn btn-grey wide-cancel ms-auto"><svg width="9" height="9"><use href="#i-close"/></svg>Cancel</button>
            <button type="button" class="btn btn-save wide-save"><svg width="11" height="10"><use href="#i-tick"/></svg>Save</button>
            <button type="button" class="btn btn-save wide-close"><svg width="11" height="10"><use href="#i-tick"/></svg>Save &amp; backup &amp; close</button>
          </footer>
        </div>
      </main>
    </div>
  </div>

  <script>
    const ic = (name, w, h, extra = '') => `<svg width="${w}" height="${h || w}" ${extra}><use href="#i-${name}"/></svg>`;

    // sidebar
    const sideItems = [
      [0, 'Home', 'home', '', 30], [0, 'Live dashboard', 'gauge', '', 30], 'rule',
      [0, 'Control Center', 'antenna', 'down'], [0, 'Integration', 'layers', 'up'],
      [1, 'Profiles', 'chip', '', 0, true], [1, 'ASM', 'globe'], [1, 'CI', 'findfill'], [1, 'ETL/ELT Pipelines', 'etl'],
      [1, 'Profile test manager', 'flask'], [1, 'MCP Server', 'mcp'], [1, 'DataFlow', 'flow', 'down'], [1, 'EngDAT', 'fileimg', 'down'],
      [0, 'Orchestration', 'wand', 'up'], [1, 'Custom type definitions', 'people'], [1, 'Input forms', 'form', 'down'],
      [1, 'Portals', 'box'], [1, 'Workflow', 'slide', 'up'],
      [2, 'Association criterias', 'link'], [2, 'Client workflows', 'desk'], [2, 'Custom subroutines', 'table'], [2, 'Debugger', 'bug'],
      [2, 'Delivery instruction com...', 'truck'], [2, 'Event handlings', 'handle'], [2, 'Event recorder', 'rec'], [2, 'REST API', 'crab'],
      [2, 'Testing sets', 'play'], [2, 'Tracking state workflows', 'slide'], [2, 'Working state transform...', 'slide'],
      [1, 'Widgets', 'widget'], [1, 'Dashboards', 'chart'], [1, 'Print documents', 'print'], [1, 'Number ranges', 'bars'], [1, 'Free components', 'free']
    ];
    document.getElementById('sideNav').insertAdjacentHTML('beforeend', sideItems.map(item => {
      if (item === 'rule') return '<div class="side-rule"></div>';
      const [lv, text, icon, caret] = item;
      const size = lv === 2 ? 14 : lv === 1 ? 11 : 13;
      return `<a class="side-link lv${lv}${item[5] ? ' is-on' : ''}"${item[4] ? ' style="height:30px"' : ''}>${ic(icon, size)}<span>${text}</span>${caret ? ic(caret, 11, 11, 'class="side-caret"') : ''}</a>`;
    }).join(''));

    // tabs
    const tabs = [
      ['Main settings', 'list', ''], ['Phase 1', 'arrowbar', 'bolt'], ['Phase 2', 'filepen', 'world'],
      ['Phase 3', 'leftright', 'four', true], ['Phase 5', 'server', 'tick'], ['Phase 6', 'reply', 'two']
    ];
    document.getElementById('tabRow').innerHTML = tabs.map(t => {
      const sup = t[2] === 'two'
        ? '<span class="tab-sup" style="width:12px;height:12px;border-radius:50%;background:#111;color:#fff;font-size:8px;line-height:12px;text-align:center">2</span>'
        : t[2] ? `<span class="tab-sup">${ic(t[2], 11)}</span>` : '';
      return `<div class="tab-item${t[3] ? ' is-on' : ''}">${ic(t[1], 11)}<span class="ms-1">${t[0]}</span>${sup}</div>`;
    }).join('');

    // toolbar
    const tools = ['expand', '1:1', 'right', 'link', 'pct', 'cubes', 'search', 'cap', 'rows', 'fileword', 'eye', 'flask'];
    document.getElementById('toolRow').innerHTML = tools.map(t =>
      `<span class="tool-btn">${t === '1:1' ? t : ic(t, 14)}</span>`).join('') +
      `<button type="button" class="btn key-btn ms-auto"><span class="hint-tip"></span>${ic('keyb', 11)}Ctrl + Alt + X</button>`;

    // menu strips under the trees
    document.querySelectorAll('[data-menu]').forEach(el => {
      el.innerHTML = ic('burger', 11, 10) + '<span>Menu</span>' +
        ['up2', 'up', 'down', 'down2', 'left'].map(n => ic(n, 11, 11, 'class="chev"')).join('');
    });

    // source tree: name, has badge, filled folder, required, selected
    const srcRows = [
      ['UNB', 1, 0, 1], ['UNH', 1, 0, 1], ['BGM', 1, 0, 1], ['CTA', 1], ['COM'], ['DTM', 0, 1], ['TSR'], ['CUX'], ['MOA'], ['FTX'], ['CNT'], ['DOC'], ['GDS'],
      ['SG1'], ['SG2'], ['SG3', 0, 1], ['SG4'], ['SG6'], ['SG7'], ['SG8'], ['SG12', 0, 1, 1], ['SG19'], ['SG20', 0, 1, 0, 1], ['SG39'], ['UNT', 1, 0, 1]
    ];
    document.getElementById('srcTree').innerHTML = srcRows.map(r => `
      <div class="tree-line${r[4] ? ' is-sel' : ''}">
        <span class="tree-pad" style="width:4px"></span><span class="tree-plus">+</span><span class="tree-dash" style="width:5px"></span>
        ${ic(r[2] ? 'folderfill' : 'folder', 12, 11)}
        ${r[1] ? '<span class="tree-one">1</span>' : ''}
        <span class="tree-m">m</span>
        <span class="tree-name wide">${r[0]}</span>${r[3] ? '<span class="req-star">*</span>' : ''}
      </div>`).join('');

    // target tree
    const leaf = (lv, text, o = {}) => {
      const pad = lv === 1 ? 48 : 68;
      const tag = o.lock ? `<span class="tree-tag">${ic('lock', 9, 10)}</span>`
        : o.fx ? `<span class="tree-tag">${ic('fx', 10, 10)}</span>` : '';
      return `<div class="tree-line${o.sel ? ' is-sel' : ''}"><span class="tree-pad guide" style="width:${pad}px"></span><span class="tree-dash" style="width:12px"></span><span class="tree-dot${o.on ? ' on' : ''}"></span>${tag}<span class="tree-name${tag ? '' : ' wide'}">${text}</span></div>`;
    };
    const node = (lv, text, o = {}) => {
      const pad = lv === 0 ? 24 : lv === 1 ? 42 : 62;
      return `<div class="tree-line"><span class="tree-pad" style="width:${pad}px"></span><span class="tree-plus">${o.open ? '−' : '+'}</span><span class="tree-dash" style="width:6px"></span>${ic(o.full ? 'folderfill' : 'folder', 12, 11)}${o.plain ? '' : '<span class="tree-one">1</span>'}<span class="tree-name wide">${text}</span>${o.req ? '<span class="req-star">*</span>' : ''}</div>`;
    };
    document.getElementById('dstTree').innerHTML = [
      node(0, 'batch:pallets', { full: 1, plain: 1 }),
      leaf(1, 'action#130_attr', { lock: 1 }), leaf(1, 'lockForCreateKey#131_attr'), leaf(1, 'lockKey#132_attr'), leaf(1, 'rememberAs#133_attr'), leaf(1, 'event#134_attr'),
      node(1, 'eventStorage#135'), node(1, 'search#142'), node(1, 'Pallet', { open: 1, req: 1 }),
      leaf(2, 'id_attr', { fx: 1, sel: 1 }), node(2, 'init_pallets', { plain: 1 }), node(2, 'preProcessor#distributionCenter'),
      leaf(2, 'distributionCenter#91_attr'), leaf(2, 'barcode_attr', { on: 1 }), node(2, 'preProcessor#store'), leaf(2, 'store#93_attr'),
      leaf(2, 'tOrder_attr', { fx: 1 }), leaf(2, 'parentBarcode_attr'), node(2, 'currentWorkingState'), node(2, 'width#103'), node(2, 'height#106'),
      node(2, 'weight#109'), node(2, 'arrivalPlanned'), node(2, 'commissionDateTime'), node(2, 'length')
    ].join('');

    // functions
    const fns = ['(a > b) and (a < c)', '(int) a / b', '+/- Working days', '-a', 'a * b', 'a + b', 'a - b', 'a / b', 'a < 0', 'a < b', 'a <= b',
      'a == b ? c : break', 'a == b ? c : d', 'a == empty ? b : c', 'a == true ? b : break', 'a == true ? b : c', 'a > b', 'a >= 0', 'a >= b'];
    document.getElementById('fnList').innerHTML = fns.map(f => {
      const d = document.createElement('div');
      d.className = 'fn-line';
      d.textContent = f;
      return d.outerHTML;
    }).join('');

    // parameters
    const params = [
      ['A', '#', 'select id from retaildistributionlogistics_pallet where barcode = @1:s@', 1], ['B', '#', 'scm', 1], ['C', 'o', 'F7402-3'],
      ['D', '#'], ['E', '#'], ['F', '#'], ['G', '#']
    ];
    document.getElementById('paramList').innerHTML = params.map((p, i) => `
      <div class="param-line">
        <span class="param-letter">${p[0]}${p[3] ? '<i>*</i>' : ''}</span>
        <span class="param-kind">${p[1] === 'o' ? '<b></b>' : '#'}</span>
        <div class="param-box d-flex align-items-center${p[2] ? '' : ' empty'}"><span class="${i === 0 ? 'tight-text' : ''}">${p[2] || 'Input parameter'}</span><span class="more-dots">•••</span></div>
      </div>`).join('');
  </script>
</body>
</html>
